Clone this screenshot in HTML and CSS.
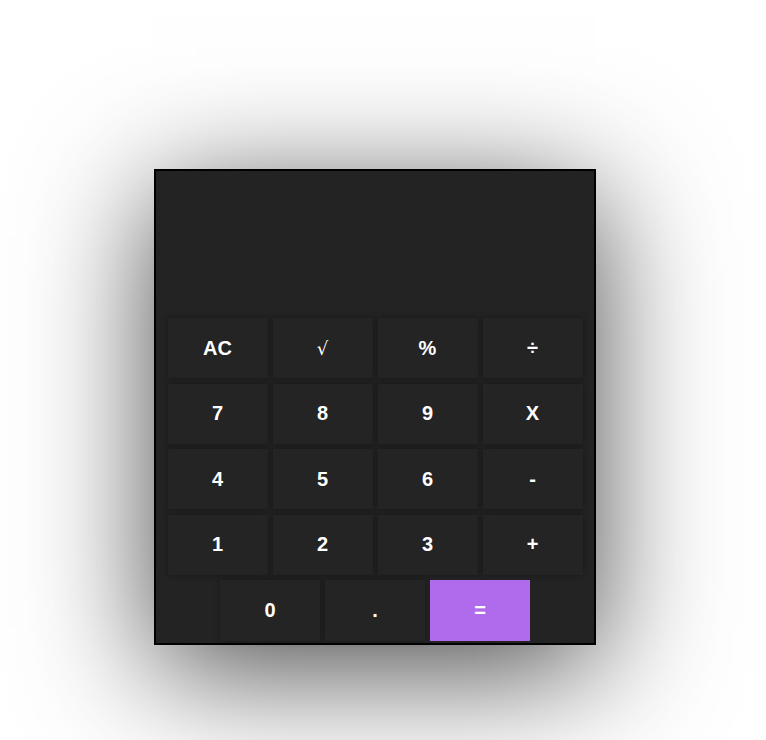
FILE: index.html
```html
<!DOCTYPE html>
<html>
<head>
<meta charset="utf-8">
<link rel="stylesheet" href="styles.css">
</head>
<body>
<div class="page">
  <div class="calc">
    <div class="display"></div>
    <div class="keys">
      <button class="key">AC</button>
      <button class="key key-thin">√</button>
      <button class="key">%</button>
      <button class="key">÷</button>
      <button class="key">7</button>
      <button class="key">8</button>
      <button class="key">9</button>
      <button class="key">X</button>
      <button class="key">4</button>
      <button class="key">5</button>
      <button class="key">6</button>
      <button class="key">-</button>
      <button class="key">1</button>
      <button class="key">2</button>
      <button class="key">3</button>
      <button class="key">+</button>
    </div>
    <div class="last-row">
      <button class="key">0</button>
      <button class="key">.</button>
      <button class="key key-equals">=</button>
    </div>
  </div>
</div>
</body>
</html>
```

FILE: styles.css
```css
html, body {
  margin: 0;
  padding: 0;
  background: #ffffff;
}

.page {
  padding: 169px 0 0 154px;
  height: 740px;
  box-sizing: border-box;
}

.calc {
  width: 442px;
  box-sizing: border-box;
  border: 2px solid #000;
  background: #232323;
  box-shadow: 0 25px 120px rgba(0, 0, 0, 0.72);
  padding-bottom: 2px;
}

.display {
  height: 147px;
}

.keys {
  display: grid;
  grid-template-columns: repeat(4, 100px);
  grid-auto-rows: 60px;
  column-gap: 5px;
  row-gap: 5.5px;
  justify-content: center;
}

.last-row {
  display: flex;
  justify-content: center;
  gap: 5px;
  margin-top: 5px;
}

.key {
  width: 100px;
  height: 60px;
  padding: 0;
  border: none;
  background: #242424;
  color: #ffffff;
  font-family: "Liberation Sans", Arial, sans-serif;
  font-weight: bold;
  font-size: 20px;
  box-shadow: 0 0 6px rgba(0, 0, 0, 0.35);
  cursor: pointer;
}

.last-row .key {
  height: 61px;
}

.key-thin {
  font-weight: normal;
  font-family: "DejaVu Serif", serif;
  font-size: 18px;
}

.key-equals {
  background: #b06bec;
  box-shadow: none;
}
```
